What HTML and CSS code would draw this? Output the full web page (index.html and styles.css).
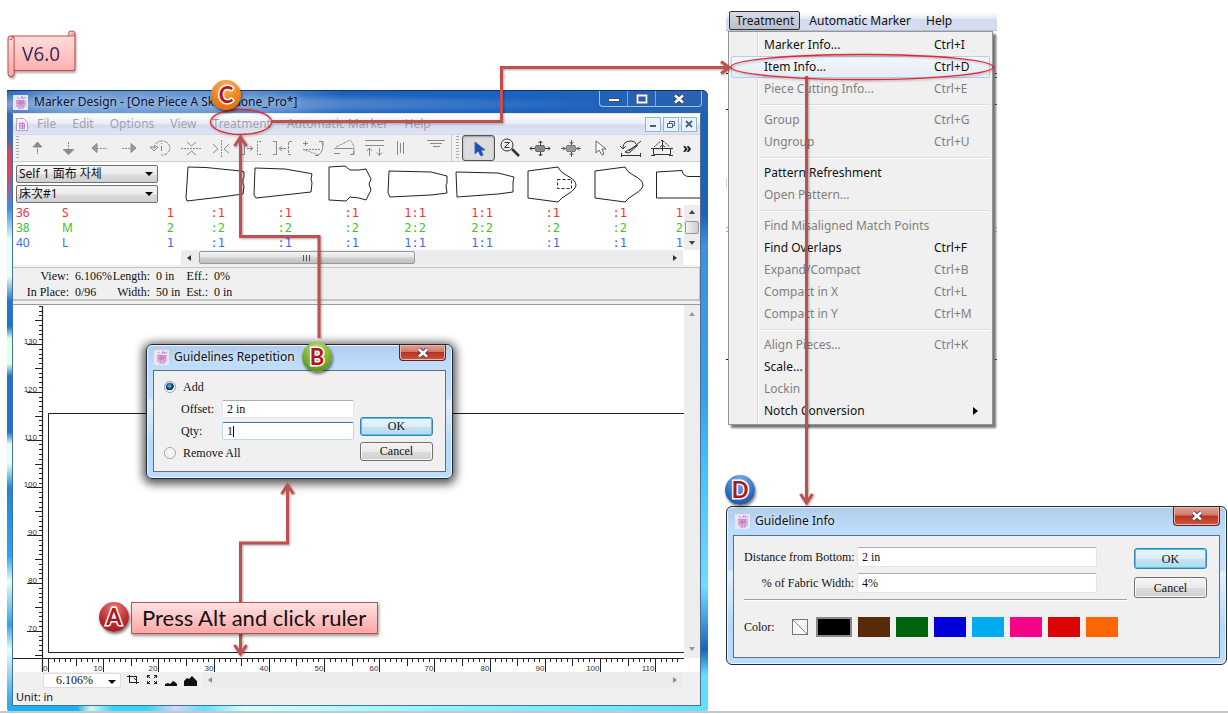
FILE: index.html
```html
<!DOCTYPE html>
<html lang="en">
<head>
<meta charset="utf-8">
<title>Marker Design guidelines</title>
<link rel="stylesheet" href="styles.css">
</head>
<body>
<svg class="defs" aria-hidden="true">
  <defs>
    <symbol id="logo" viewBox="0 0 15 15">
      <rect width="15" height="15" fill="#ebe6ee"/>
      <path d="M3 5.500h8M3 8h9M4 11h7M4 6v6M7 5v8M10 6v7M5 13h6M6 4l-2-2M8 4l1-3M10 4l3-2M9 2l2 1M12 5v7" fill="none" stroke="#cb84cd"/>
      <path d="M5 9h5M5 7h6" stroke="#a565b4"/>
    </symbol>
    <symbol id="cross" viewBox="0 0 12 10">
      <path d="M2 1.500l8 7M10 1.500l-8 7" stroke="#45484f" stroke-width="4.400"/>
      <path d="M2 1.500l8 7M10 1.500l-8 7" stroke="#fff" stroke-width="2.400"/>
    </symbol>
  </defs>
</svg>
<main class="board">

  <div class="version">
    <svg viewBox="0 0 72 50" aria-hidden="true">
      <defs><linearGradient id="pink" x2="0" y2="1"><stop offset="0" stop-color="#ffe3e3"/><stop offset="1" stop-color="#ffa8a8"/></linearGradient></defs>
      <path d="M1 9q0-3 3-3h57v-3q0-2 3-2t3 3v34q0 2-2 2h-58v2q0 4-3 4t-3-4z" fill="url(#pink)" stroke="#c0504d"/>
      <path d="M7 40V8q0-2-3-2M61 6h3q3 0 3-2M2 9q4 1 3-2M63 4q2 0 2-1" fill="none" stroke="#c0504d"/>
    </svg>
    <span>V6.0</span>
  </div>

  <section class="app" aria-label="Marker Design">
    <header class="app-title">
      <svg class="logo"><use href="#logo"/></svg>
      <h1>Marker Design - [One Piece A Skirt_clone_Pro*]</h1>
      <div class="win-controls">
        <button aria-label="Minimize"><svg width="12" height="8"><rect x=".5" y="3.500" width="11" height="3" fill="#fff" stroke="#3a5076"/></svg></button>
        <button aria-label="Maximize"><svg width="12" height="10"><path d="M1.500 1.500h9v7h-9z" fill="none" stroke="#3a5076" stroke-width="3"/><path d="M1.500 1.500h9v7h-9z" fill="none" stroke="#fff" stroke-width="1.800"/></svg></button>
        <button aria-label="Close"><svg width="12" height="10"><use href="#cross"/></svg></button>
      </div>
    </header>

    <div class="client">
      <nav class="menubar">
        <svg class="doc" viewBox="0 0 13 14"><path d="M.5 .5h8l4 4v9h-12z" fill="#f6eef8" stroke="#a9a0b5"/><path d="M3 6h6M3 8.500h7M4 11h5M4 5v7M7 4v8M9 6v6" stroke="#c26fc4"/></svg>
        <button>File</button><button>Edit</button><button>Options</button><button>View</button><button>Treatment</button><button>Automatic Marker</button><button>Help</button>
        <div class="mdi">
          <button aria-label="Minimize document"><svg width="10" height="8"><path d="M2 6h6" stroke="#44607a" stroke-width="2"/></svg></button>
          <button aria-label="Restore document"><svg width="10" height="9"><path d="M3.500 3V1.500h5v4H7M1.500 3.500h5v4h-5z" fill="none" stroke="#44607a"/></svg></button>
          <button aria-label="Close document"><svg width="10" height="8"><path d="M2 1l6 6M8 1l-6 6" stroke="#44607a" stroke-width="1.800"/></svg></button>
        </div>
      </nav>

      <div class="toolbar">
        <i class="grip"></i>
        <div class="tools wide">
          <button aria-label="Up"><svg viewBox="0 0 24 20"><path d="M12.500 4V16M8 9l4.500-5 4.500 5z" stroke-dasharray="3 .5"/><path d="M9 8.500l3.500-4 3.500 4z" fill="#888"/></svg></button>
          <button aria-label="Down"><svg viewBox="0 0 24 20"><path d="M12.500 4v8" stroke-dasharray="2 1"/><path d="M7 11.500h11l-5.500 5z"/><path d="M9 12h7l-3.500 4z" fill="#888"/></svg></button>
          <button aria-label="Left"><svg viewBox="0 0 24 20"><path d="M10 5.500v9l-5-4.500z" fill="#999"/><path d="M10 10.500h10" stroke-dasharray="2 1"/></svg></button>
          <button aria-label="Right"><svg viewBox="0 0 24 20"><path d="M14 5.500v9l5-4.500z" fill="#999"/><path d="M5 10.500h9" stroke-dasharray="2 1"/></svg></button>
          <button aria-label="Rotate"><svg viewBox="0 0 24 20"><path d="M6 11a8 7 0 1 1 7 6" stroke-dasharray="4 1"/><path d="M2 9l4 4 4-4zM13.500 8v5M13.500 5v1"/></svg></button>
          <button aria-label="Flip vertical"><svg viewBox="0 0 24 20"><path d="M2 10.500h21" stroke-dasharray="2 1"/><path d="M8 4l4.500 4L17 4M8 17l4.500-4 4.500 4"/></svg></button>
          <button aria-label="Flip horizontal"><svg viewBox="0 0 24 20"><path d="M12.500 2v17" stroke-dasharray="2 1"/><path d="M4 6l5 5-5 4M20 6l-5 5 5 4"/></svg></button>
          <button aria-label="Move right"><svg viewBox="0 0 24 20"><path d="M1 3.500h3.500v13H1M7 10.500h6M10 8l3 2.500-3 2.500"/><path d="M21 3.500h-3.500v13H21" stroke-dasharray="2 1"/></svg></button>
          <button aria-label="Move left"><svg viewBox="0 0 24 20"><path d="M2 3.500h3.500v13H2M9 10.500h6M11 8l-3 2.500 3 2.500"/><path d="M21 3.500h-3.500v13H21" stroke-dasharray="3 1"/></svg></button>
          <button aria-label="Rotate up"><svg viewBox="0 0 24 20"><path d="M2 5.500h5M4.500 3v5M18 3.500h4v4M21 3.500q3 9-4 14h-3"/><path d="M2 11.500h18M4 12l14 5" stroke-dasharray="2 1"/></svg></button>
          <button aria-label="Rotate down"><svg viewBox="0 0 24 20"><path d="M2 15.500h6M2 10.500h19M18 16.500h4v-4"/><path d="M4 9l14-7q6 6 3 14" stroke-dasharray="3 1"/></svg></button>
          <button aria-label="Align top"><svg viewBox="0 0 24 20"><path d="M2 2.500h19M2 7.500h19M6.500 18v-7M4 13l2.500-3L9 13M16.500 10v7M14 14.500l2.500 3 2.500-3"/></svg></button>
          <button aria-label="Align left"><svg viewBox="0 0 24 20"><path d="M4.500 3v14M7.500 5v10M10.500 4v12"/></svg></button>
          <button aria-label="Stack"><svg viewBox="0 0 24 20"><path d="M3 2.500h18M6 5.500h12M9 8.500h7"/></svg></button>
        </div>
        <i class="grip"></i>
        <div class="tools dark">
          <button class="on" aria-label="Select"><svg viewBox="0 0 24 20"><path d="M8 4v12l3-3 3 5 2-1-2-5h4z" fill="#1c4fb5" stroke="#3a64b8"/></svg></button>
          <button aria-label="Zoom"><svg viewBox="0 0 24 20"><circle cx="9" cy="7" r="6"/><path d="M6.500 4.500h5l-5 5h5"/><path d="M14 11l7 7" stroke-width="2.500"/></svg></button>
          <button aria-label="Expand"><svg viewBox="0 0 24 20"><path d="M8 7.500h8l1 3-1 3H8l-1-3z" fill="#888" stroke="#666"/><path d="M12.500 3v4M12.500 14v4M2 10.500h5M17 10.500h5M10.500 5l2-2 2 2M10.500 16l2 2 2-2M4 8.500l-2 2 2 2M20 8.500l2 2-2 2"/></svg></button>
          <button aria-label="Compact"><svg viewBox="0 0 24 20"><path d="M8 7.500h8l1 3-1 3H8l-1-3z" fill="#999" stroke="#777"/><path d="M12.500 2v5M12.500 14v5M2 10.500h5M17 10.500h5M10.500 4l2 2 2-2M10.500 17l2-2 2 2M4 8.500l2 2-2 2M20 8.500l-2 2 2 2" stroke="#555"/></svg></button>
          <button aria-label="Pointer"><svg viewBox="0 0 24 20"><path d="M7 3v12l3-3 3 5 2-1-2-5h4z" fill="#fff" stroke="#666"/></svg></button>
          <button aria-label="Rotate piece"><svg viewBox="0 0 24 20"><path d="M4 10q0-7 8-7 4 0 5 3M1 8l3 3 3-3M2 17.500h19M2.500 15v4M21.500 15v4M6 14L19 7l-9 8zM22 3L10 13"/></svg></button>
          <button aria-label="Measure"><svg viewBox="0 0 24 20"><path d="M3.500 10.500h17v6h-17zM12.500 2v11M10 9l2.500-2L15 9M1 10.500h4M19 10.500h4M1 17.500h4M19 17.500h4"/><path d="M4 9l8-7 8 7" stroke-dasharray="2 1"/></svg></button>
        </div>
        <button class="more" aria-label="More tools">»</button>
      </div>

      <div class="pieces">
        <div class="picks">
          <div class="pick"><select aria-label="Material"><option>Self 1 面布 자체</option></select></div>
          <div class="pick"><select aria-label="Bed"><option>床次#1</option></select></div>
        </div>
        <svg class="shapes" viewBox="0 0 520 43" preserveAspectRatio="xMinYMin slice" aria-label="Pattern pieces">
          <g fill="none" stroke="#222">
            <path d="M7 5l18 .5L60 9l3 1v5l-1 2v5l1 2-1 8-22 3-34 4-1-3z"/>
            <path d="M74 6l30 1 23 4 4 1-1 5 1 4-1 9-18 2-37 4-2-3z"/>
            <path d="M148 5l16-1 5 4 9 0 7-1 5 10-2 5 2 6-5 10-7-2-9-1-4 4-17-1z"/>
            <path d="M208 9l42 1 16 4v7l-1 2 1 8-16 2-41 2-2-4z"/>
            <path d="M275 10l42 1 16 4-1 5v10l-15 2-41 3z"/>
            <path d="M347 9l30-4q2 5 8 8 10 5 10 10 0 4-8 9-7 4-10 8l-30-4z"/>
            <path d="M376.500 17.500h14v9h-14z" stroke-dasharray="3 2"/>
            <path d="M414 9l30-4q2 5 8 8 10 5 10 10 0 4-8 9-7 4-10 8l-30-4z"/>
            <path d="M540 14.500h-32q-6 0-7-6l-25.500 1.500v26h64"/>
          </g>
        </svg>
        <div class="sizes">
          <table aria-label="Sizes and quantities">
            <colgroup><col class="c-size"><col class="c-name"><col class="c-sum"><col class="c-first"><col span="6" class="c-qty"><col></colgroup>
            <tr class="red"><th>36</th><th>S</th><td>1</td><td>:1</td><td>:1</td><td>:1</td><td>1:1</td><td>1:1</td><td>:1</td><td>:1</td><td>1</td></tr>
            <tr class="green"><th>38</th><th>M</th><td>2</td><td>:2</td><td>:2</td><td>:2</td><td>2:2</td><td>2:2</td><td>:2</td><td>:2</td><td>2</td></tr>
            <tr class="blue"><th>40</th><th>L</th><td>1</td><td>:1</td><td>:1</td><td>:1</td><td>1:1</td><td>1:1</td><td>:1</td><td>:1</td><td>1</td></tr>
          </table>
          <div class="vscroll"><i class="tri up"></i><i class="thumb"></i><i class="tri down"></i></div>
        </div>
        <div class="hscroll"><i class="tri left"></i><i class="bar"><b></b></i><i class="tri right"></i></div>
      </div>

      <dl class="info">
        <dt>View:</dt><dd>6.106%</dd><dt>Length:</dt><dd>0 in</dd><dt>Eff.:</dt><dd>0%</dd>
        <dt>In Place:</dt><dd>0/96</dd><dt>Width:</dt><dd>50 in</dd><dt>Est.:</dt><dd>0 in</dd>
      </dl>

      <div class="work">
        <svg class="sheet" id="sheet" viewBox="0 0 671 367" preserveAspectRatio="xMinYMin slice" aria-label="Marker sheet">
          <g fill="none" stroke="#222">
            <path d="M29.500 1V367M0 353.500H671" stroke-width="1.200"/>
            <path d="M671 108.500H35.500V347.500H671"/>
          </g>
          <g id="ticks" stroke="#222" fill="#333"></g>
        </svg>
        <div class="vscroll tall"><i class="tri up"></i><i class="tri down"></i></div>
      </div>

      <div class="zoombar">
        <div class="pick zoom"><select aria-label="Zoom level"><option>6.106%</option></select></div>
        <button aria-label="Fit piece"><svg viewBox="0 0 14 12"><path d="M1 2.500h9M3 8.500h10M3.500 1v8M10.500 2v8M8 4l3 3" fill="none" stroke="#222"/></svg></button>
        <button aria-label="Fit all"><svg viewBox="0 0 14 12"><path d="M2.500 4V1.500H5M9 1.500h2.500V4M2.500 7v2.500H5M9 9.500h2.500V7M2 1l3 3M12 1L9 4M2 10l3-3M12 10L9 7" fill="none" stroke="#222"/></svg></button>
        <button aria-label="Small marker"><svg viewBox="0 0 14 12"><path d="M1 12V10l3-1 2 1 3-3 2 1 2 2v2z" fill="#111"/></svg></button>
        <button aria-label="Large marker"><svg viewBox="0 0 14 12"><path d="M1 12V7l3-3 2 1 3-3 2 2 3 3v5z" fill="#111"/></svg></button>
        <div class="hscroll plain"><i class="tri left"></i><i class="tri right"></i></div>
      </div>
      <footer class="unit">Unit: in</footer>
    </div>
  </section>

  <form class="dialog repetition" onsubmit="return false">
    <header><svg class="logo"><use href="#logo"/></svg><h2>Guidelines Repetition</h2><button class="close" type="button" aria-label="Close"><svg width="12" height="10"><use href="#cross"/></svg></button></header>
    <div class="panel">
      <div class="fields">
        <label class="radio"><input type="radio" name="mode" checked>Add</label>
        <div class="field"><label for="offset">Offset:</label><input id="offset" value="2 in"></div>
        <div class="field active"><label for="qty">Qty:</label><input id="qty" value="1"></div>
        <label class="radio"><input type="radio" name="mode">Remove All</label>
      </div>
      <div class="actions"><button class="primary">OK</button><button type="button">Cancel</button></div>
    </div>
  </form>

  <section class="menu-shot">
    <svg class="scraps" viewBox="0 0 271 414" aria-hidden="true"><path d="M266 23h5v40h-5z" fill="#ececec"/><path d="M0 61.500h271M266 65.500h5M266 92.500h5M0 97.500h3M0 347.500h271" stroke="#111"/><path d="M0 166v10M0 215.500h271M0 219.500h271" stroke="#aaa"/></svg>
    <nav class="menubar2"><button class="open">Treatment</button><button>Automatic Marker</button><button>Help</button></nav>
    <div class="menu">
      <button>Marker Info...<kbd>Ctrl+I</kbd></button>
      <button class="hover">Item Info...<kbd>Ctrl+D</kbd></button>
      <button disabled>Piece Cutting Info...<kbd>Ctrl+E</kbd></button>
      <hr>
      <button disabled>Group<kbd>Ctrl+G</kbd></button>
      <button disabled>Ungroup<kbd>Ctrl+U</kbd></button>
      <hr>
      <button>Pattern Refreshment</button>
      <button disabled>Open Pattern...</button>
      <hr>
      <button disabled>Find Misaligned Match Points</button>
      <button>Find Overlaps<kbd>Ctrl+F</kbd></button>
      <button disabled>Expand/Compact<kbd>Ctrl+B</kbd></button>
      <button disabled>Compact in X<kbd>Ctrl+L</kbd></button>
      <button disabled>Compact in Y<kbd>Ctrl+M</kbd></button>
      <hr>
      <button disabled>Align Pieces...<kbd>Ctrl+K</kbd></button>
      <button>Scale...</button>
      <button disabled>Lockin</button>
      <button class="sub">Notch Conversion<svg width="5" height="8"><path d="M0 0l5 4-5 4z"/></svg></button>
    </div>
  </section>

  <form class="dialog guideline" onsubmit="return false">
    <header><svg class="logo"><use href="#logo"/></svg><h2>Guideline Info</h2><button class="close" type="button" aria-label="Close"><svg width="12" height="10"><use href="#cross"/></svg></button></header>
    <div class="panel">
      <div class="fields">
        <div class="field"><label for="dist">Distance from Bottom:</label><input id="dist" value="2 in"></div>
        <div class="field"><label for="pct">% of Fabric Width:</label><input id="pct" value="4%"></div>
        <hr>
        <div class="colors"><span>Color:</span>
          <button type="button" class="none" aria-label="No color"><svg viewBox="0 0 16 16"><path d="M0 0l16 16" stroke="#777"/></svg></button>
          <button type="button" class="black" aria-label="Black"></button><button type="button" class="brown" aria-label="Brown"></button><button type="button" class="dkgreen" aria-label="Green"></button><button type="button" class="dkblue" aria-label="Blue"></button><button type="button" class="cyan" aria-label="Cyan"></button><button type="button" class="magenta" aria-label="Magenta"></button><button type="button" class="scarlet" aria-label="Red"></button><button type="button" class="orange" aria-label="Orange"></button>
        </div>
      </div>
      <div class="actions"><button class="primary">OK</button><button type="button">Cancel</button></div>
    </div>
  </form>

  <svg class="arrows" width="1228" height="714" aria-hidden="true">
    <g fill="none" stroke="#c0504d" stroke-width="3">
      <path d="M272 121.500H501.500V67.500H728M721 61.500l8 6-8 6"/>
      <path d="M319 338V236.500H240.500V139M234.500 146l6-9 6 9"/>
      <path d="M287.500 487V543H240.500V655M281.500 494l6-9 6 9M234.500 645l6 9 6-9"/>
      <path d="M806.500 76V503M800.500 494l6 9 6-9"/>
    </g>
    <g fill="none" stroke="#e8262b" stroke-width="1.300"><ellipse cx="241" cy="122" rx="30.500" ry="12.500"/><ellipse cx="862" cy="67" rx="131" ry="12.500"/></g>
  </svg>
  <p class="note">Press Alt and click ruler</p>
  <span class="ball a">A</span>
  <span class="ball b">B</span>
  <span class="ball c">C</span>
  <span class="ball d">D</span>
</main>
<script src="ruler.js"></script>
</body>
</html>
```

FILE: ruler.js
```js
const ns = "http://www.w3.org/2000/svg";
const ticks = document.getElementById("ticks");

function line(x1, y1, x2, y2) {
  const el = document.createElementNS(ns, "path");
  el.setAttribute("d", `M${x1} ${y1}L${x2} ${y2}`);
  ticks.appendChild(el);
}

function label(x, y, value) {
  const el = document.createElementNS(ns, "text");
  el.setAttribute("x", x);
  el.setAttribute("y", y);
  el.textContent = value;
  ticks.appendChild(el);
}

function length(n) {
  return n % 10 === 0 ? 15 : n % 5 === 0 ? 7 : 3;
}

// Horizontal ruler
for (let n = 0; n <= 114; n++) {
  const x = Math.round(35 + n * 5.52) + 0.5;
  line(x, 354, x, 354 + (n % 10 === 0 ? 13 : length(n)));
  if (n % 10 === 0) label(x - 1, 366, n);
}

// Vertical ruler
for (let n = 65; n <= 138; n++) {
  const y = Math.round(39 + (130 - n) * 4.78) + 0.5;
  line(29, y, 29 - length(n), y);
  if (n % 10 === 0) label(24, y - 1, n);
}
```

FILE: styles.css
```css
* { box-sizing: border-box; }
body { margin: 0; background: #fff; font: 12px/16px "Noto Sans", "Noto Sans CJK TC", "Noto Sans CJK KR", sans-serif; color: #111; }
button, input, select { font: inherit; color: inherit; margin: 0; padding: 0; border: 0; background: none; border-radius: 0; outline: 0; }
h1, h2, dl, dd, p { margin: 0; font: inherit; }
.defs { position: absolute; width: 0; height: 0; }
.board { position: relative; min-height: 713px; border-bottom: 2px solid #c9c9c9; overflow: hidden; }
.logo { width: 15px; height: 15px; flex: none; }

.version { position: absolute; left: 7px; top: 30px; width: 73px; filter: drop-shadow(1px 2px 1px #0005); }
.version svg { display: block; width: 100%; }
.version span { position: absolute; left: 15px; top: 12px; font: 19px/24px "Noto Sans", sans-serif; color: #40315a; }

.app { position: absolute; left: 7px; top: 90px; width: 701px; padding: 0 7px 6px 5px; border-radius: 0 6px 4px 4px;
  background:
    linear-gradient(90deg, #19b4f4 0 10%, #d8f8e8 12%, #35d5ff 15% 20%, #d5d5ff 24%, #5ce0ff 28%, #d5ffff 34%, #8ff6ff 60%, #5fe0ff) bottom / 100% 6px no-repeat,
    linear-gradient(#1b62b8, #1f62b4 20%, #3f8fdc 25%, #37a0ea 50%, #45c0fb 60%, #6fdcff 80%, #1b62b8 90%, #63dffc 94%) right / 7px 100% no-repeat,
    linear-gradient(#2a66bd, #3a6cb5 8%, #d6455a 10% 13%, #3a8ee0 19%, #e5fff2 24% 30%, #1b76d3 34%, #1878d6 38%, #dfffe8 40% 44%, #1b74d0 46% 55%, #e5fff2 57% 60%, #1d85d8 64%, #25a8f8 75%, #e5fff2 79%, #2aa3ee 86%, #e5fff2 90%, #3aa7f5 98%); }
.app-title { display: flex; align-items: flex-start; gap: 6px; height: 23px; margin: 0 -7px 0 -5px; padding-left: 6px; border-top: 1px solid #13336b; border-radius: 0 6px 0 0;
  background: radial-gradient(ellipse at 10% 60%, #7fa8dc 0, #7fa8dc00 60%), linear-gradient(90deg, #2e6ab9, #6f9ad0 8%, #5f8fcd 35%, #1b60bc 48%, #1b62c0 75%, #2b62ae); }
.app-title .logo { margin-top: 4px; }
.app-title h1 { flex: 1; margin-top: 3px; color: #0a1428; white-space: nowrap; text-shadow: 0 0 6px #cfe0f5; }
.win-controls { display: flex; width: 103px; height: 16px; margin-right: 6px; border: 1px solid #9fc3e9; border-top: 0; border-radius: 0 0 4px 4px; }
.win-controls button { flex: 28; display: grid; place-items: center; border-right: 1px solid #7aa7d9; }
.win-controls button:last-child { flex: 46; border: 0; }
.client { border: 1px solid #4b6f96; border-top-color: #e0eaf7; background: #f0f0f0; }

.menubar { display: flex; align-items: center; height: 20px; padding: 0 3px; background: linear-gradient(#fff, #e8ebf7 50%, #d5dbee 55%, #dfe4f4); color: #a2a2aa; }
.menubar > button { margin-right: 16px; line-height: 18px; }
.doc { width: 12px; height: 13px; margin-right: 9px; }
.mdi { display: flex; gap: 2px; margin-left: auto; }
.mdi button { width: 16px; height: 15px; display: grid; place-items: center; border: 1px solid #93b5cf; background: #e9f3fc; }

.toolbar { display: flex; align-items: center; height: 28px; padding: 0 3px; border-bottom: 1px solid #cfcfcf; border-top: 1px solid #d8d8d8; }
.grip { width: 3px; height: 24px; background: repeating-linear-gradient(#aaa 0 1px, #f0f0f0 1px 3px); margin-right: 3px; }
.tools { flex: 7; display: flex; }
.tools.wide { flex: 14; border-right: 1px solid #ccc; margin-right: 4px; }
.tools button { flex: 1; height: 26px; display: grid; place-items: center; }
.tools svg { width: 24px; height: 20px; fill: none; stroke: #8a8a8a; }
.tools.dark svg { stroke: #333; }
.tools .on { border: 1px solid #555; border-radius: 3px; background: #dcdcdc; box-shadow: inset 0 1px 2px #999; }
.more { width: 20px; font-size: 14px; line-height: 18px; font-weight: 700; }

.pieces { display: grid; grid-template: 43px 45px 15px / 168px minmax(0, 1fr); background: #fff; }
.picks { display: flex; flex-direction: column; gap: 2px; padding: 3px 0 0 3px; }
.pick { position: relative; width: 142px; height: 18px; }
.pick select { appearance: none; display: block; width: 100%; height: 100%; padding: 0 2px; line-height: 16px; border: 1px solid #707070; border-radius: 2px; background: linear-gradient(#f4f4f4, #ebebeb 50%, #dcdcdc 55%, #d0d0d0); }
.pick::after { content: ""; position: absolute; right: 5px; top: 7px; border: 4px solid transparent; border-top-color: #000; border-bottom: 0; }
.shapes { width: 100%; height: 43px; }
.sizes { grid-column: 1 / 3; display: flex; justify-content: space-between; overflow: hidden; }
.sizes table { width: 670px; table-layout: fixed; border-collapse: collapse; font: 12px/15px "DejaVu Sans Mono", monospace; }
.sizes td { padding: 1px 0 0; line-height: 14px; text-align: right; }
.sizes th { padding: 0 0 0 3px; text-align: left; font: 12px/15px "Noto Sans", sans-serif; }
.c-size { width: 46px; } .c-name { width: 84px; } .c-sum { width: 31px; } .c-first { width: 51px; } .c-qty { width: 67px; }
.red { color: #f52f36; } .green { color: #3fc32a; } .blue { color: #3a6af5; }
.vscroll { width: 16px; flex: none; display: flex; flex-direction: column; align-items: center; justify-content: space-between; padding: 5px 0; background: #ededed; }
.thumb { width: 14px; height: 13px; border: 1px solid #999; border-radius: 2px; background: linear-gradient(90deg, #f4f4f4, #ccc); }
.tri { border: 3px solid transparent; }
.tri.up { border-bottom: 4px solid #444; border-top: 0; }
.tri.down { border-top: 4px solid #444; border-bottom: 0; }
.tri.left { border-right: 4px solid #333; border-left: 0; }
.tri.right { border-left: 4px solid #333; border-right: 0; }
.hscroll { grid-column: 2; display: flex; align-items: center; padding: 0 6px; background: #ececec; margin-right: 17px; }
.bar { flex: 0 1 216px; height: 13px; margin: 0 auto 0 8px; display: grid; place-items: center; border: 1px solid #999; border-radius: 2px; background: linear-gradient(#f4f4f4, #e4e4e4 45%, #cfcfcf 55%, #c0c0c0); }
.bar b { width: 8px; height: 6px; background: repeating-linear-gradient(90deg, #555 0 1px, transparent 1px 3px); }

.info { display: grid; grid-template-columns: 56px 46px 35px 35px 23px 1fr; align-content: center; height: 34px; margin-top: 2px; border: 1px solid #c4c4c4; border-width: 1px 1px 2px 0; font: 12px/16px "Liberation Serif", "Times New Roman", serif; white-space: nowrap; }
.info dt { justify-self: end; }
.info dd { padding-left: 6px; }

.work { display: flex; margin-top: 3px; border-top: 1px solid #999; background: #fff; }
.sheet { display: block; flex: 1; min-width: 0; height: 367px; }
.sheet text { font: 8px/8px "Liberation Sans", sans-serif; text-anchor: end; stroke: none; }
.tall { height: 353px; padding: 7px 0; }
.tall .tri, .plain .tri { opacity: .5; }
.zoombar { display: flex; align-items: center; height: 16px; padding-left: 30px; gap: 5px; }
.pick.zoom { width: 78px; height: 15px; font: 12px/14px "Liberation Serif", serif; }
.zoom select { border: 1px solid #ddd; background: #fff; padding-left: 12px; line-height: 13px; }
.zoombar button { width: 14px; height: 14px; }
.zoombar button svg { display: block; width: 14px; height: 12px; }
.plain { flex: 1; height: 14px; justify-content: space-between; }
.unit { padding: 2px 3px 0; height: 17px; font-size: 11px; line-height: 14px; }

.dialog { position: absolute; border: 1px solid #1f2a36; border-radius: 6px; padding: 0 6px 6px; background: linear-gradient(#b0cde9, #bddcfb 14%, #c5e0fc 40%, #e4f0fd 42%, #b5d8fb 75%, #bcdcfa); box-shadow: inset 0 0 0 1px #ecf5ff; }
.dialog header { display: flex; align-items: flex-start; gap: 5px; padding-left: 2px; height: 28px; }
.dialog header .logo { margin-top: 7px; }
.dialog h2 { flex: 1; margin-top: 6px; white-space: nowrap; text-shadow: 0 0 5px #fff; }
.close { width: 47px; height: 19px; display: grid; place-items: center; border: 1px solid #5d2520; border-top: 0; border-radius: 0 0 4px 4px; background: linear-gradient(#e6a095, #d2776a 45%, #bb3320 50%, #c95743); box-shadow: inset 0 0 0 1px #f0b5aa; }
.panel { display: flex; justify-content: space-between; border: 1px solid #5f6f80; background: #f0f0f0; font: 12px/16px "Liberation Serif", "Times New Roman", serif; }
.field { display: flex; align-items: center; }
.field input { border: 1px solid #e1e4ea; border-top-color: #abadb3; border-radius: 2px; background: #fff; padding: 0 4px; min-width: 0; }
.actions { display: flex; flex-direction: column; }
.actions button { border: 1px solid #707070; border-radius: 3px; background: linear-gradient(#f3f3f3, #ebebeb 50%, #dcdcdc 52%, #cfcfcf); box-shadow: inset 0 0 0 1px #fafafa; }
.actions .primary { border-color: #3c7fb1; background: linear-gradient(#eaf5fb, #d9eef8 50%, #c5e3f2 52%, #b6d9ec); box-shadow: inset 0 0 0 1px #3fcaf4; }

.repetition { left: 146px; top: 344px; width: 307px; box-shadow: inset 0 0 0 1px #ecf5ff, 0 2px 10px 3px #000a; }
.repetition header { height: 25px; padding-left: 1px; gap: 5px; }
.repetition header .logo { margin-top: 5px; }
.repetition h2 { margin-top: 4px; }
.repetition .close { height: 16px; }
.repetition .panel { padding: 7px 12px 9px 10px; }
.repetition .fields { width: 190px; display: flex; flex-direction: column; gap: 4px; }
.radio { display: flex; align-items: center; gap: 7px; height: 18px; line-height: 18px; }
.radio input { appearance: none; width: 12px; height: 12px; border: 1px solid #a2a6aa; border-radius: 50%; background: radial-gradient(#fff, #ddd); box-shadow: inset 0 0 0 1px #fff; }
.radio input:checked { background: radial-gradient(circle at 45% 40%, #5cd1ff 0, #0d4a80 35%, #0a2f55 50%, #e8eef2 55%); }
.repetition .field { position: relative; height: 18px; padding-left: 17px; }
.repetition .field label { flex: 1; }
.repetition .field input { width: 132px; height: 18px; }
.repetition .active input { border-color: #b7d9ed; border-top-color: #3d7bad; }
.active::after { content: ""; position: absolute; left: 69px; top: 4px; width: 1px; height: 11px; background: #000; }
.repetition .actions { gap: 6px; padding-top: 39px; width: 73px; }
.repetition .actions button { height: 19px; line-height: 15px; }

.guideline { left: 726px; top: 506px; width: 501px; }
.guideline .panel { padding: 11px 12px 20px 10px; }
.guideline .fields { width: 383px; }
.guideline .field { gap: 3px; height: 20px; margin-bottom: 6px; }
.guideline .field label { width: 110px; text-align: right; white-space: nowrap; }
.guideline .field input { width: 240px; height: 20px; }
.guideline hr { margin: 0; border: 0; border-top: 1px solid #a0a0a0; border-bottom: 1px solid #fff; }
.guideline .actions { gap: 8px; padding-top: 1px; width: 73px; }
.guideline .actions button { height: 21px; line-height: 18px; }
.colors { display: flex; align-items: center; gap: 6px; margin-top: 16px; }
.colors span { width: 42px; }
.colors button { width: 32px; height: 20px; }
.colors .none { width: 16px; height: 16px; border: 1px solid #777; background: #f8f8f8; margin-right: 2px; }
.none svg { display: block; }
.colors .black { width: 36px; background: #000; border: 2px solid #888; }
.brown { background: #572b09; } .dkgreen { background: #00640f; } .dkblue { background: #0000d8; } .cyan { background: #00aced; } .magenta { background: #f50487; } .scarlet { background: #dc0505; } .orange { background: #ff6500; }

.menu-shot { position: absolute; left: 726px; top: 12px; width: 271px; }
.scraps { position: absolute; left: 0; top: 0; width: 100%; }
.menubar2 { position: relative; display: flex; gap: 15px; align-items: flex-end; height: 19px; padding-left: 3px; background: linear-gradient(#fff, #e8ebf7 35%, #d5dbee 40%, #d6dcef); border-bottom: 1px solid #b9bfd0; }
.menubar2 button { height: 19px; line-height: 17px; }
.menubar2 .open { padding: 0 5px 0 6px; margin-right: -6px; border: 1px solid #333; border-radius: 2px; background: linear-gradient(#d9dce6, #b9becd); }
.menu { position: relative; width: 265px; margin-left: 2px; padding: 2px; border: 1px solid #979797; background: linear-gradient(90deg, #f0f0f0 28px, #dcdcdc 28px 29px, #fff 29px 30px, #f0f0f0 30px); box-shadow: 3px 3px 2px #777; }
.menu button { display: flex; align-items: center; width: 100%; height: 22px; padding: 0 17px 0 32px; border: 1px solid transparent; border-radius: 2px; text-align: left; }
.menu button:disabled { color: #808080; }
.menu .hover { border-color: #aecff7; background: linear-gradient(#f3f6fb, #e6ecf5); }
.menu kbd { width: 38px; margin-left: auto; font: inherit; white-space: nowrap; }
.menu .sub { padding-right: 11px; }
.menu .sub svg { margin-left: auto; }
.menu hr { height: 2px; margin: 4px 0 3px 29px; border: 0; border-top: 1px solid #dcdcdc; border-bottom: 1px solid #fff; }

.arrows { position: absolute; left: 0; top: 0; filter: drop-shadow(1px 1px 1px #0005); pointer-events: none; }
.note { position: absolute; left: 131px; top: 602px; padding: 2px 11px 3px 10px; font: 22px/25px Lato, sans-serif; color: #111; border: 1px solid #c0504d; background: linear-gradient(#ffe3e3, #ffa6a6); box-shadow: 1px 2px 3px #0006; white-space: nowrap; }
.ball { position: absolute; width: 30px; height: 30px; border-radius: 50%; text-align: center; font: 700 22px/30px Lato, sans-serif; color: #b3151b; -webkit-text-stroke: 3px #fff; paint-order: stroke fill; box-shadow: 1px 2px 3px #0008; }
.a { left: 99px; top: 602px; background: radial-gradient(circle at 50% 20%, #e77a78, #b8282c 60%, #8f1d20); }
.b { left: 302px; top: 342px; background: radial-gradient(circle at 50% 20%, #b8dc6a, #76a82c 60%, #4e7a18); }
.c { left: 211px; top: 80px; background: radial-gradient(circle at 50% 20%, #fbb35c, #ee7d14 60%, #d4690c); }
.d { left: 725px; top: 475px; background: radial-gradient(circle at 50% 20%, #7ab2ea, #2d6cb8 60%, #1c4c8c); }
```
